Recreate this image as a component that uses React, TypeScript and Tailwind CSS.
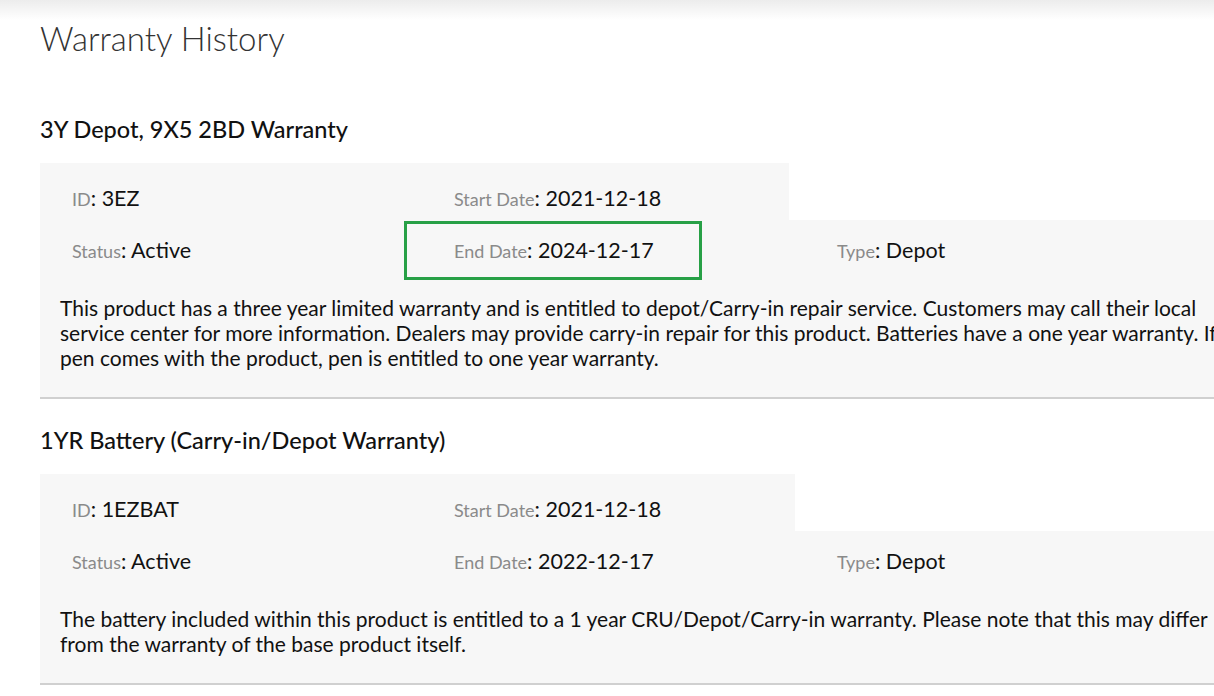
const font = { fontFamily: 'Lato, "Open Sans", sans-serif' };

type W = {
  title: string;
  id: string;
  start: string;
  end: string;
  type: string;
  status: string;
  desc: string;
  topWidth: string;
  highlight?: boolean;
};

const items: W[] = [
  {
    title: '3Y Depot, 9X5 2BD Warranty',
    id: '3EZ',
    start: '2021-12-18',
    end: '2024-12-17',
    type: 'Depot',
    status: 'Active',
    desc: 'This product has a three year limited warranty and is entitled to depot/Carry-in repair service. Customers may call their local service center for more information. Dealers may provide carry-in repair for this product. Batteries have a one year warranty. If pen comes with the product, pen is entitled to one year warranty.',
    topWidth: 'w-[749px]',
    highlight: true,
  },
  {
    title: '1YR Battery (Carry-in/Depot Warranty)',
    id: '1EZBAT',
    start: '2021-12-18',
    end: '2022-12-17',
    type: 'Depot',
    status: 'Active',
    desc: 'The battery included within this product is entitled to a 1 year CRU/Depot/Carry-in warranty. Please note that this may differ from the warranty of the base product itself.',
    topWidth: 'w-[755px]',
  },
];

const Field = ({ label, value }: { label: string; value: string }) => (
  <span className="text-[21.5px] text-[#111]">
    <span className="text-[18px] text-[#8a8a8a]">{label}</span>: {value}
  </span>
);

export default function App() {
  return (
    <div className="h-[696px] w-[1214px] overflow-hidden bg-white" style={font}>
      <div className="h-5 bg-gradient-to-b from-[#ececec] to-white" />
      <div className="w-[1260px] pl-10">
        <h1 className="text-[33px] font-light leading-9 text-[#333]">Warranty History</h1>
        {items.map((w, i) => (
          <div key={w.id} className={i === 0 ? 'mt-[57px]' : 'mt-[25px]'}>
            <h2 className="text-[23.5px] font-medium leading-8 text-[#111]">{w.title}</h2>
            <div className="mt-[18px] border-b-2 border-[#d0d0d0]">
              <div className={`${w.topWidth} flex h-[57px] items-center bg-[#f7f7f7] pt-[14px]`}>
                <div className="w-[382px] pl-8"><Field label="ID" value={w.id} /></div>
                <div className="pl-[32px]"><Field label="Start Date" value={w.start} /></div>
              </div>
              <div className="bg-[#f7f7f7] pb-[27px]">
                <div className="flex h-[60px] items-center">
                  <div className="w-[364px] pl-8"><Field label="Status" value={w.status} /></div>
                  <div
                    className={`flex h-[59px] w-[298px] items-center border-[3px] pl-[47px] ${w.highlight ? 'border-[#27a046]' : 'border-transparent'}`}
                  >
                    <Field label="End Date" value={w.end} />
                  </div>
                  <div className="pl-[135px]"><Field label="Type" value={w.type} /></div>
                </div>
                <p className="pr-5 pl-5 pt-[15px] text-[21px] leading-[25px] text-[#111]">{w.desc}</p>
              </div>
            </div>
          </div>
        ))}
      </div>
    </div>
  );
}
